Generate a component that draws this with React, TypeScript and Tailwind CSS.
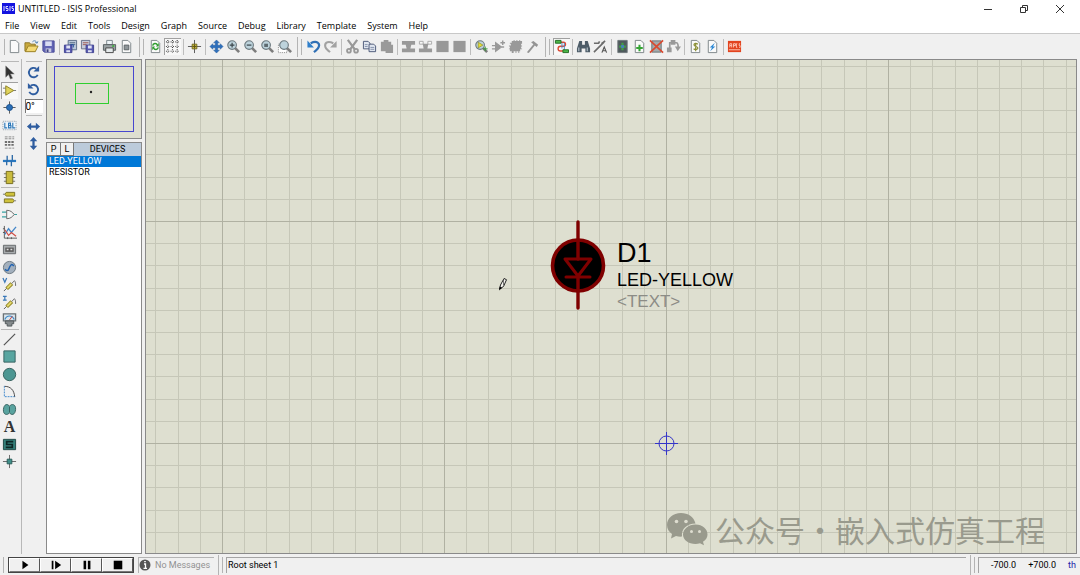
import type { ReactNode } from 'react';
import clsx from 'clsx';

const GRID_STEPS = [22, 44, 67, 89, 111, 133, 155, 178, 200];

const MENUS = ['File', 'View', 'Edit', 'Tools', 'Design', 'Graph', 'Source', 'Debug', 'Library', 'Template', 'System', 'Help'];

const page = <path d="M3.500 1.500h6l3 3v10h-9z" fill="#fafafa" stroke="#7c8488" />;
const lens = (
  <>
    <path d="M9.500 9.500l4.500 4.500" stroke="#7d7d7d" strokeWidth="2.800" />
    <circle cx="6.500" cy="6.500" r="4.600" fill="#bdd3dc" stroke="#6c797f" strokeWidth="1.200" />
  </>
);
const disk = (
  <>
    <path d="M2 2h12v12H3.500L2 12.500z" fill="#6264b4" stroke="#4a4c98" />
    <path d="M4.500 2.500h7v5h-7z" fill="#d9dcf2" />
    <path d="M5 10h6v4H5z" fill="#c9cbe0" />
    <path d="M6 11h2v3H6z" fill="#3f4180" />
  </>
);
const smallDisk = (
  <>
    <path d="M1.500 6.500h8v8h-8z" fill="#5658b0" stroke="#3f4190" />
    <path d="M3.500 7h4v3h-4zM3.500 12h4v2h-4z" fill="#dfe2f4" />
  </>
);
const probe = (
  <>
    <path d="M2 15l3-3" stroke="#555" />
    <path d="M5 12.500L10.500 7" stroke="#8d8220" strokeWidth="4" />
    <path d="M5.500 12L10 7.500" stroke="#e3d76c" strokeWidth="2" />
    <path d="M10.500 7l2-2.500c1.500-1 2 .5 2 5" stroke="#666" fill="none" />
  </>
);

const ICONS: Record<string, ReactNode> = {
  new: page,
  open: (
    <>
      <path d="M1 13V4h5l1 1.500h5V13z" fill="#c9a93c" stroke="#8b7426" />
      <path d="M1.500 13.500l3-6H15l-3 6z" fill="#f3d975" stroke="#9a8128" />
      <path d="M9 3c2-2 4-1 4.500 1M12 3.500l2 1 .8-2" fill="none" stroke="#4d7fb0" />
    </>
  ),
  save: disk,
  importSection: (
    <>
      <path d="M5.500 1.500h9v10h-9z" fill="#bcc9da" stroke="#5c6d86" />
      <path d="M7 4h6M7 6h6" stroke="#4f6580" />
      {smallDisk}
      <path d="M8 6h3v3" stroke="#234f9c" fill="none" />
    </>
  ),
  exportSection: (
    <>
      <path d="M1.500 1.500h9v9h-9z" fill="#c6cbd8" stroke="#66708a" />
      <path d="M3 4h6M3 6h4" stroke="#a05a55" />
      <path d="M6.500 6.500h8v8h-8z" fill="#5658b0" stroke="#3f4190" />
      <path d="M8.500 7h4v3h-4zM8.500 12h4v2h-4z" fill="#dfe2f4" />
    </>
  ),
  print: (
    <>
      <path d="M5 1.500h6V6H5z" fill="#eef4f8" stroke="#7b868c" />
      <path d="M1.500 6h13v6h-13z" fill="#9aa2a5" stroke="#555d60" />
      <path d="M4 9.500h8v5H4z" fill="#e5eaec" stroke="#444" />
      <path d="M11 7.500h2" stroke="#3fae3f" strokeWidth="2" />
    </>
  ),
  printArea: (
    <>
      {page}
      <path d="M5.500 6.500h5v5h-5z" fill="#8f9699" stroke="#5b6164" />
    </>
  ),
  redraw: (
    <>
      {page}
      <path d="M5 7c.5-2.500 4-3 5-.5M11 9c-.5 2.500-4 3-5 .5" fill="none" stroke="#2f9c2f" strokeWidth="1.600" />
      <path d="M11.500 4v4h-3zM4.500 12V8h3z" fill="#2f9c2f" />
    </>
  ),
  grid: (
    <path
      d="M3 1v14M8 1v14M13 1v14M1 3h14M1 8h14M1 13h14"
      stroke="#444"
      strokeDasharray="1 1.500"
      strokeWidth="1.200"
    />
  ),
  origin: (
    <>
      <path d="M8 1v14M1 8h14" stroke="#555" />
      <path d="M5.500 5.500h5v5h-5z" fill="#c5b536" stroke="#6f6620" />
      <path d="M8 6v4M6 8h4" stroke="#5a5318" />
    </>
  ),
  pan: (
    <path
      d="M8 1l3 3H9.300v2.700H12V5l3 3-3 3V9.300H9.300V12H11l-3 3-3-3h1.700V9.300H4V11L1 8l3-3v1.700h2.700V4H5z"
      fill="#2d6fbd"
      stroke="#245a99"
      strokeWidth=".5"
    />
  ),
  zoomIn: (
    <>
      {lens}
      <path d="M4 6.500h5M6.500 4v5" stroke="#3c474c" strokeWidth="1.300" />
    </>
  ),
  zoomOut: (
    <>
      {lens}
      <path d="M4 6.500h5" stroke="#3c474c" strokeWidth="1.300" />
    </>
  ),
  zoomAll: (
    <>
      {lens}
      <path d="M4.500 5h4v3.500h-4z" fill="#5d6a70" />
    </>
  ),
  zoomArea: (
    <>
      <path d="M1.500 5.500h9v9h-9z" fill="#fff" stroke="#888" strokeDasharray="1 1" />
      <g transform="translate(1 0)">{lens}</g>
    </>
  ),
  undo: (
    <>
      <path d="M5 4.500C12 1 15 5 13.500 8.500 13 11 10.500 12 8.500 14" fill="none" stroke="#2f6fb5" strokeWidth="2.400" />
      <path d="M1.500 1.500v7.500h7z" fill="#2f7fcb" />
    </>
  ),
  redo: (
    <>
      <path d="M11 4.500C4 1 1.500 5 2.500 8.500 3 11 5.500 12 7.500 14" fill="none" stroke="#a2a2a2" strokeWidth="2.200" />
      <path d="M14.500 2v7h-7z" fill="#a2a2a2" />
    </>
  ),
  cut: (
    <>
      <path d="M3 1l7.500 10M13 1L5.500 11" stroke="#999" strokeWidth="2.400" />
      <circle cx="4.200" cy="12.500" r="2" fill="none" stroke="#999" strokeWidth="2" />
      <circle cx="11.800" cy="12.500" r="2" fill="none" stroke="#999" strokeWidth="2" />
    </>
  ),
  copy: (
    <>
      <path d="M1.500 2.500h5l2 2v6h-7z" fill="#dfe5ef" stroke="#4b5878" />
      <path d="M7.500 5.500h5l2 2v6h-7z" fill="#dfe5ef" stroke="#4b5878" />
      <path d="M9 9h4M9 11h4M3 6h3M3 8h3" stroke="#8592ac" />
    </>
  ),
  paste: <path d="M2 3h3V1h5v2h3v3h2v9H7v-2H2z" fill="#999" />,
  blockCopy: <path d="M1 2h14v4h-4l-1 4h5v4H1v-4h5L5 6H1z" fill="#999" />,
  blockMove: (
    <>
      <path d="M1.500 2.500h4v3h-4zM10.500 2.500h4v3h-4z" fill="#f7f7f7" stroke="#aaa" />
      <path d="M5 5h6l-1 5h5v4H1v-4h5z" fill="#999" />
    </>
  ),
  block: <path d="M1.500 2h13v12h-13z" fill="#989898" />,
  pick: (
    <>
      {lens}
      <path d="M4.500 3.500v6l5-3z" fill="#e4dd35" stroke="#837d1c" strokeWidth=".6" />
      <path d="M12 8v5M9.500 10.500h5" stroke="#3d9a3d" />
    </>
  ),
  make: (
    <>
      <path d="M5 4v9l6-4.500zM1 7h4M1 10.500h4M10 8.500h4" fill="#999" stroke="#999" strokeWidth="1.400" />
      <path d="M12.500 1.500v5M10 4h5" stroke="#999" strokeWidth="1.500" />
    </>
  ),
  packaging: <path d="M4 2h2V1h1v1h2V1h1v1h2V1h1v1h2v3h-1v2h1v1h-1v2h1v1h-2v2h-1v2h-1v-2H9v2H8v-2H6v2H4v-2H2v-2H1v-1h1V8H1V7h2V5H2V4h2z" fill="#999" />,
  decompose: <path d="M2 14l7-8.500-2.500-2L9 2l5 4-1.500 2.500L10.500 7 4 15z" fill="#949494" />,
  wire: (
    <>
      <path d="M7 3.500h3c3 0 3 4 0 4.300H7c-3.500 0-3.500 5 0 5h3" fill="none" stroke="#dd4a35" strokeWidth="1.500" />
      <path d="M8.500 4v6M11 4v8" fill="none" stroke="#4585c2" />
      <path d="M1.500 1.500h6v3h-6zM9.500 11.500h6v3h-6z" fill="#4db84a" stroke="#226b22" />
    </>
  ),
  search: (
    <>
      <path d="M3.500 2h3v4h3V2h3l2.500 8v4h-5v-4H6v4H1v-4z" fill="#4d5c68" />
      <path d="M3 9v4M12 9v4" stroke="#b4c0ca" strokeWidth="1.200" />
    </>
  ),
  property: (
    <>
      <path d="M1 14L12 3M1 4.500h5l1-2M9 5l4-3" stroke="#6b6b6b" strokeWidth="1.700" fill="none" />
      <path d="M9.500 14.500L12 8.500l2.500 6M10.500 12.500h3.500" stroke="#555" fill="none" strokeWidth="1.200" />
    </>
  ),
  designExplorer: (
    <>
      <path d="M3 1.500h10v13H3z" fill="#4f5a5d" stroke="#70797c" />
      <path d="M8 4v8M4.500 8h7" stroke="#43a047" strokeWidth="2.400" />
      <path d="M6.500 6.500h3v3h-3z" fill="#4682bd" />
    </>
  ),
  newSheet: (
    <>
      {page}
      <path d="M8 6v7M4.500 9.500h7" stroke="#35a535" strokeWidth="2.200" />
    </>
  ),
  removeSheet: (
    <>
      <path d="M3 2h10v12H3z" fill="#a4abad" stroke="#697073" />
      <path d="M1 1.500l14 13M15 1.500L1 14.500" stroke="#d94a30" strokeWidth="1.800" />
    </>
  ),
  exitSheet: (
    <>
      <path d="M4 10V4h7c2 0 2 2 2 5" fill="none" stroke="#999" strokeWidth="1.800" />
      <path d="M1 9h5v5H1zM5 1h5v5H5zM9.500 8h6.500l-3.500 5z" fill="#999" />
    </>
  ),
  bom: (
    <>
      {page}
      <path d="M10.500 5.500c-2-1.500-4.500-.5-4 1s4 1.500 4 3-2.500 2.500-4.500 1M8.200 4v9" fill="none" stroke="#8a8f35" strokeWidth="1.300" />
    </>
  ),
  erc: (
    <>
      {page}
      <path d="M10.500 4L5 9h2.500L5.500 13 11 8H8.500z" fill="#2e8ad6" />
    </>
  ),
  ares: (
    <>
      <path d="M1 2h14v12H1z" fill="#e2431e" />
      <path d="M3 9V5h2v4M3 7h2M7 9V5h2v2H7M11 5H10v4h1M14 5h-1v2h1v2h-1M2 11.500h12" stroke="#ffc9b8" fill="none" />
    </>
  ),
  select: <path d="M4 1v12l3-2.800L9 15l2.200-1L9 9.500h4z" fill="#333" stroke="#777" strokeWidth=".6" />,
  component: (
    <>
      <path d="M1 5.500h3M1 10.500h3M12 8h3" stroke="#777" />
      <path d="M4 3v10l8.500-5z" fill="#e1d45c" stroke="#8b8024" />
    </>
  ),
  junction: (
    <>
      <path d="M8 1.500v13M1.500 8h13" stroke="#555" />
      <circle cx="8" cy="8" r="3.200" fill="#2a6fb8" stroke="#1b4f8a" />
    </>
  ),
  label: (
    <>
      <path d="M1 3.500h14v9H1z" fill="#eef4fa" stroke="#8d9aa6" strokeDasharray="1 1" />
      <path d="M3 5v5.500h2.500M7 5v5.500h2.500V8H7h2V5.500H7M11.500 5v5.500H14" stroke="#2c77b8" fill="none" strokeWidth="1.200" />
    </>
  ),
  script: (
    <>
      <path d="M3 2h10M3 4h10M3 14h10" stroke="#8a8a8a" strokeDasharray="3 1" />
      <path d="M3 7.500h10M3 10.500h10" stroke="#6e6e6e" strokeDasharray="2.500 1" strokeWidth="2" />
    </>
  ),
  bus: (
    <>
      <path d="M1 8.500h14" stroke="#2878c0" strokeWidth="2.400" />
      <path d="M5.500 3v6M11 2v6M5 9v4M10 9v5" stroke="#2b68a5" strokeWidth="1.400" />
    </>
  ),
  subcircuit: (
    <>
      <path d="M2 4h12M2 8h12M2 12h12" stroke="#777" strokeWidth="1.300" />
      <path d="M4.500 1.500h7v13h-7z" fill="#c9bb3d" stroke="#746b1c" />
    </>
  ),
  terminal: (
    <>
      <path d="M4.500 2.500h9v4h-9L3 4.500zM2.500 9.500h9l1.500 2-1.500 2h-9z" fill="#cfc23c" stroke="#7b7224" />
      <path d="M1 4.500h2M13 11.500h2" stroke="#777" />
    </>
  ),
  pin: (
    <>
      <path d="M0 5.500h5M0 10.500h5M13 8h3" stroke="#39a2a2" strokeWidth="1.200" />
      <path d="M5 3.500c4 0 6 2 8 4.500-2 2.500-4 4.500-8 4.500z" fill="#f5f5f5" stroke="#666" />
    </>
  ),
  graph: (
    <>
      <path d="M2.500 1v13H16M1 4h2M1 8h2M6 13v2M10 13v2" stroke="#555" fill="none" />
      <path d="M3 10l4-6 3 4 5-6" stroke="#4587c8" fill="none" strokeWidth="1.400" />
      <path d="M3 5l4 6 3-3 5 4" stroke="#cf4b42" fill="none" strokeWidth="1.200" />
    </>
  ),
  tape: (
    <>
      <path d="M1.500 3.500h13v9h-13z" fill="#a7abad" stroke="#63686a" />
      <path d="M3.500 6h9v4.500h-9z" fill="#5a5a5a" />
      <path d="M5 8h2M9 8h2" stroke="#ddd" strokeWidth="1.500" />
    </>
  ),
  generator: (
    <>
      <circle cx="8" cy="8" r="6.500" fill="#a3b0bd" stroke="#68747e" />
      <path d="M3.500 9.500c1 2.500 3 2.500 4-.5s3-6 5-2.500" stroke="#2363b0" fill="none" strokeWidth="1.600" />
    </>
  ),
  voltage: (
    <>
      {probe}
      <path d="M1 1l2 4.500L5 1" stroke="#3a78b8" fill="none" strokeWidth="1.300" />
    </>
  ),
  current: (
    <>
      {probe}
      <path d="M1 1.500h4M3 1.500v4M1 5.500h4" stroke="#3a78b8" fill="none" strokeWidth="1.300" />
    </>
  ),
  instrument: (
    <>
      <path d="M1.500 2h13v7.500h-13z" fill="#d9e5ec" stroke="#6a7276" strokeWidth="1.400" />
      <path d="M3 8c2-5 8-5 10 0" stroke="#3d87c5" fill="none" strokeWidth="1.300" />
      <path d="M8 8.500l3-4" stroke="#ca3b36" />
      <path d="M3.500 9.500h9v3h-2v2.500h-5v-2.500h-2z" fill="#858b8d" stroke="#4f5557" />
    </>
  ),
  line: <path d="M2 14L14 2" stroke="#555" strokeWidth="1.400" />,
  box: <path d="M2 2h12v12H2z" fill="#58a5a0" stroke="#35605e" />,
  circle: <circle cx="8" cy="8" r="6.600" fill="#4c9692" stroke="#35605e" />,
  arc: (
    <>
      <path d="M2.500 2v11.500H14" stroke="#3c85cc" strokeDasharray="2 1" fill="none" />
      <path d="M3 2.500c6 0 10 4 10.500 11" stroke="#444" fill="none" />
    </>
  ),
  path: <path d="M8 4.500C6 1.500 2 2 1.500 8S6 14.500 8 11.500c2 3 6 2.500 6.500-3.500S10 1.500 8 4.500zM8 5v6" fill="#59a39f" stroke="#35605e" />,
  symbol: (
    <>
      <path d="M1.500 2.500h13v11h-13z" fill="#347f79" stroke="#1e4643" />
      <path d="M12 5H5v3h6v3H4" stroke="#0d2625" strokeWidth="1.800" fill="none" />
    </>
  ),
  marker: (
    <>
      <path d="M8 1v14M1 8h14" stroke="#666" />
      <path d="M5.500 5.500h5v5h-5z" fill="#408f89" stroke="#2a5c59" />
    </>
  ),
  rotateCw: (
    <>
      <path d="M12.500 10.500A5 5 0 1 1 11 4" fill="none" stroke="#2f5da0" strokeWidth="2" />
      <path d="M14 1v6H8z" fill="#2f5da0" />
    </>
  ),
  rotateCcw: (
    <>
      <path d="M3.500 10.500A5 5 0 1 0 5 4" fill="none" stroke="#2f5da0" strokeWidth="2" />
      <path d="M2 1v6h6z" fill="#2f5da0" />
    </>
  ),
  mirrorX: <path d="M1 8l4.500-4v2.800h5V4L15 8l-4.500 4V9.200h-5V12z" fill="#2f5da0" />,
  mirrorY: <path d="M8 1l4 4.500H9.200v5H12L8 15l-4-4.500h2.800v-5H4z" fill="#2f5da0" />,
};

function Icon({ name }: { name: string }) {
  return (
    <svg viewBox="0 0 16 16" className="size-[15px] shrink-0">
      {ICONS[name]}
    </svg>
  );
}

function ToolButton({ name, active }: { name: string; active?: boolean }) {
  return (
    <button
      aria-label={name}
      className={clsx(
        'flex h-[17px] w-[17px] items-center justify-center',
        active && 'bg-[#f8f8f8] shadow-[inset_1px_1px_0_#a0a0a0]'
      )}
    >
      {name === 'text' ? (
        <span className="font-['Liberation_Serif',serif] text-base leading-4 font-bold text-[#333]">A</span>
      ) : (
        <Icon name={name} />
      )}
    </button>
  );
}

// a pair of raised rails that starts every dockable bar
function Grip() {
  return (
    <div className="flex h-5 w-3 shrink-0 items-center justify-center gap-[3px]">
      <div className="h-full w-px bg-[#b4b4b4]" />
      <div className="h-4 w-px bg-[#b4b4b4]" />
    </div>
  );
}

// bars > groups > buttons
const TOOLBARS = [
  [['new', 'open', 'save'], ['importSection', 'exportSection'], ['print', 'printArea']],
  [['redraw', 'grid'], ['origin'], ['pan', 'zoomIn', 'zoomOut', 'zoomAll', 'zoomArea']],
  [['undo', 'redo'], ['cut', 'copy', 'paste'], ['blockCopy', 'blockMove', 'block', 'block'], ['pick', 'make', 'packaging', 'decompose']],
  [['wire'], ['search', 'property'], ['designExplorer', 'newSheet', 'removeSheet', 'exitSheet'], ['bom', 'erc'], ['ares']],
];

function Toolbar() {
  return (
    <div className="flex h-[25px] items-center pl-1">
      <div className="mr-px h-4 w-px bg-[#b4b4b4]" />
      {TOOLBARS.map((groups, i) => (
        <div key={i} className="flex items-center">
          {i > 0 && <Grip />}
          {groups.map((names, j) => (
            <div key={j} className="flex items-center">
              {j > 0 && (
                <div className="flex h-4 w-[5px] justify-center">
                  <div className="w-px bg-[#bdbdbd]" />
                </div>
              )}
              {names.map((name, k) => (
                <ToolButton key={k} name={name} active={name === 'grid' || name === 'wire'} />
              ))}
            </div>
          ))}
        </div>
      ))}
    </div>
  );
}

const MODES = [
  ['select', 'component', 'junction', 'label', 'script', 'bus', 'subcircuit'],
  ['terminal', 'pin', 'graph', 'tape', 'generator', 'voltage', 'current', 'instrument'],
  ['line', 'box', 'circle', 'arc', 'path', 'text', 'symbol', 'marker'],
];

function ModeBar() {
  return (
    <div className="flex w-[22px] flex-col border-r border-[#b8b8b8] pt-0.5 pl-px">
      <div className="mb-0.5 h-px w-[18px] bg-[#b8b8b8]" />
      {MODES.map((names, i) => (
        <div key={i}>
          {i > 0 && <div className="my-px h-px w-[18px] bg-[#b8b8b8]" />}
          <div className={clsx('flex flex-col justify-between', i === 0 ? 'h-[122px]' : 'h-[139px]')}>
            {names.map((name) => (
              <ToolButton key={name} name={name} active={name === 'component'} />
            ))}
          </div>
        </div>
      ))}
    </div>
  );
}

function OrientationBar() {
  return (
    <div className="flex w-6 flex-col items-center pt-0.5 pr-px">
      <div className="mb-0.5 h-px w-4 bg-[#b8b8b8]" />
      <ToolButton name="rotateCw" />
      <ToolButton name="rotateCcw" />
      <input
        aria-label="Rotation"
        defaultValue="0°"
        className="mt-px h-[14px] w-[18px] border-t border-l border-[#777] bg-white font-[Roboto,sans-serif] text-[10px] leading-3 text-black outline-none"
      />
      <div className="my-0.5 h-px w-4 bg-[#b8b8b8]" />
      <ToolButton name="mirrorX" />
      <ToolButton name="mirrorY" />
    </div>
  );
}

function SidePanel() {
  const devices = ['LED-YELLOW', 'RESISTOR'];
  return (
    <div className="flex w-24 flex-col gap-[3px]">
      <div className="h-20 border border-[#8a8a8a] bg-[#dedfd0] p-1.5">
        <svg viewBox="0 0 82 66" className="h-full w-full">
          <rect x="1.500" y="0.500" width="79" height="65" fill="none" stroke="#4747cf" />
          <rect x="22.500" y="17.500" width="33" height="20" fill="none" stroke="#2fcf2f" />
          <circle cx="38" cy="26" r="1.200" fill="#222" />
        </svg>
      </div>
      <div className="flex flex-1 flex-col border border-[#8a8a8a] bg-white font-[Roboto,sans-serif] text-[9px] leading-[11px] text-black">
        <div className="flex h-[13px] bg-[#bccbdb]">
          <button className="w-[14px] border-r border-b border-[#777] bg-[#f0f0f0]">P</button>
          <button className="w-[13px] border-r border-b border-[#777] bg-[#f0f0f0]">L</button>
          <div className="flex-1 text-center leading-[13px]">DEVICES</div>
        </div>
        <ul>
          {devices.map((device, i) => (
            <li key={device} className={clsx('px-0.5', i === 0 && 'bg-[#0078d7] text-white')}>
              {device}
            </li>
          ))}
        </ul>
      </div>
    </div>
  );
}

function Led() {
  return (
    <svg viewBox="0 0 56 90" className="absolute top-[160px] left-[404px] h-[90px] w-14">
      <circle cx="28" cy="45.500" r="25.500" fill="#000" stroke="#7f0000" strokeWidth="3.600" />
      <path d="M28 2v37M28 56v32" stroke="#7f0000" strokeWidth="3.400" strokeLinecap="round" />
      <path d="M15 39h26L28 56zM16 57h24" fill="none" stroke="#7f0000" strokeWidth="3" strokeLinecap="round" strokeLinejoin="round" />
    </svg>
  );
}

function Schematic() {
  return (
    <main className="relative mr-[3px] ml-[3px] flex-1 overflow-hidden border border-[#8a8a8a] bg-[#dedfd0] font-['Liberation_Sans',Arial,sans-serif]">
      <svg className="h-full w-full" shapeRendering="crispEdges">
        <defs>
          <pattern id="grid" x="76" y="161" width="222" height="222" patternUnits="userSpaceOnUse">
            {GRID_STEPS.map((n) => (
              <path key={n} d={`M${n + 0.5} 0v222M0 ${n + 0.5}h222`} stroke="#c6c7b8" />
            ))}
            <path d="M.5 0v222M0 .5h222" stroke="#b0b1a2" />
          </pattern>
        </defs>
        <rect width="100%" height="100%" fill="url(#grid)" />
      </svg>

      <Led />
      <div className="absolute top-[178px] left-[471px] whitespace-nowrap text-black">
        <div className="text-[27px] leading-[30px]">D1</div>
        <div className="text-lg leading-6">LED-YELLOW</div>
        <div className="text-[17px] leading-5 text-[#8c8c86]">&lt;TEXT&gt;</div>
      </div>

      {/* pencil cursor */}
      <svg viewBox="0 0 10 14" className="absolute top-[217px] left-[352px] h-[14px] w-[10px]">
        <path d="M1.500 12L2.500 8l3.500-6.500 2.500 1.200L5.500 9.500z" fill="#f4f4ee" stroke="#222" />
        <path d="M5.500 2v6" stroke="#444" strokeWidth=".7" />
        <path d="M1 13.500l.8-4 2.200 1.500z" fill="#000" />
      </svg>

      {/* sheet origin */}
      <svg viewBox="0 0 24 24" className="absolute top-[371px] left-[508px] size-6" fill="none" stroke="#3535c8">
        <circle cx="12.500" cy="12.500" r="7.500" />
        <path d="M12.500 1v23M1 12.500h23" />
      </svg>

      <div className="absolute right-[31px] bottom-1 flex items-center gap-[7px] text-[#999a8d]">
        <svg viewBox="0 0 42 34" className="h-[34px] w-[42px]" fill="currentColor">
          <path d="M15 1C7 1 1 6 1 13c0 4 2 7 5 9l-1 4.500 5-2.500c2 .6 4 .8 6 .6C15 17 21 11.500 29.500 11.500 28 5 22 1 15 1z" />
          <path d="M29.500 12.500c-7 0-12.500 4.500-12.500 10S22.500 32 29.500 32c1.500 0 3-.3 4.500-.7l4 2-1-3.500c3-2 4.500-4.500 4.500-7.300 0-5.500-5-10-12-10z" />
          <g fill="#deddd0">
            <circle cx="10.500" cy="9.500" r="1.800" />
            <circle cx="20" cy="9.500" r="1.800" />
            <circle cx="25.500" cy="19.500" r="1.500" />
            <circle cx="33.500" cy="19.500" r="1.500" />
          </g>
        </svg>
        <span className="font-['Noto_Sans_CJK_SC',sans-serif] text-[30px] leading-10 whitespace-nowrap">公众号·嵌入式仿真工程</span>
      </div>
    </main>
  );
}

function StatusBar() {
  const controls = [
    { label: 'Play', d: 'M4 2v10l7-5z' },
    { label: 'Step', d: 'M2 2h2v10H2zM6 2v10l7-5z' },
    { label: 'Pause', d: 'M3 2h3v10H3zM8 2h3v10H8z' },
    { label: 'Stop', d: 'M2 2h10v10H2z' },
  ];
  return (
    <footer className="flex h-[21px] items-center font-[Roboto,sans-serif] text-[9px] text-black">
      <div className="mr-1 ml-[3px] h-4 w-px bg-[#b4b4b4]" />
      <div className="flex h-4 border border-[#444]">
        {controls.map(({ label, d }) => (
          <button
            key={label}
            aria-label={label}
            className="flex w-[31px] items-center justify-center border border-t-white border-r-[#555] border-b-[#777] border-l-white"
          >
            <svg viewBox="0 0 14 14" className="size-3">
              <path d={d} />
            </svg>
          </button>
        ))}
      </div>
      <div className="ml-1 flex h-4 w-[76px] items-center gap-1 border-t border-l border-[#b4b4b4] text-[#929292]">
        <svg viewBox="0 0 12 12" className="size-3 shrink-0">
          <circle cx="6" cy="6" r="5.500" fill="#555" />
          <path d="M5 5h1.500v4M4.500 9.300H8M5.200 2.700h1.600" stroke="#fff" strokeWidth="1.300" fill="none" />
        </svg>
        <span className="pt-px whitespace-nowrap">No Messages</span>
      </div>
      <Grip />
      <div className="h-4 flex-1 border-t border-l border-[#a4a4a4] pl-px leading-[15px]">Root sheet 1</div>
      <Grip />
      <div className="flex h-4 w-[102px] items-center justify-between border-t border-l border-[#a4a4a4] pt-px pr-1 pl-3">
        <span>-700.0</span>
        <span>+700.0</span>
        <span className="text-[#2222a8]">th</span>
      </div>
    </footer>
  );
}

function TitleBar() {
  return (
    <header className="flex h-[17px] items-center bg-white px-0.5">
      <svg viewBox="0 0 13 11" className="h-[11px] w-[13px]">
        <path d="M0 0h13v11H0z" fill="#1414e0" />
        <path d="M2 3v5M6 3.500H4v2h2v2H4M8 3v5M11.500 3.500H10v2h1.500v2H10" stroke="#dcdcff" fill="none" />
      </svg>
      <h1 className="ml-[3px] flex-1 pt-px text-[9px]">UNTITLED - ISIS Professional</h1>
      <div className="flex text-[#333]">
        <button aria-label="Minimize" className="flex w-9 justify-center">
          <svg viewBox="0 0 10 10" className="size-[10px]">
            <path d="M1 5.500h8" stroke="currentColor" />
          </svg>
        </button>
        <button aria-label="Restore" className="flex w-9 justify-center">
          <svg viewBox="0 0 10 10" className="size-[10px]">
            <path d="M1.500 3.500h5v5h-5zM3.500 3V1.500h5v5H7" stroke="currentColor" fill="none" />
          </svg>
        </button>
        <button aria-label="Close" className="flex w-9 justify-center">
          <svg viewBox="0 0 10 10" className="size-[10px]">
            <path d="M1 1l8 8M9 1L1 9" stroke="currentColor" />
          </svg>
        </button>
      </div>
    </header>
  );
}

export default function App() {
  return (
    <div className="flex h-screen flex-col bg-[#f0f0f0] font-['Open_Sans',sans-serif] text-black">
      <TitleBar />
      <nav className="flex h-[17px] items-center gap-[11px] border-b border-[#c8c8c8] bg-white pt-0.5 pl-[5px] text-[9px]">
        {MENUS.map((menu) => (
          <button key={menu}>{menu}</button>
        ))}
      </nav>
      <Toolbar />
      <div className="flex min-h-0 flex-1">
        <ModeBar />
        <OrientationBar />
        <SidePanel />
        <Schematic />
      </div>
      <StatusBar />
    </div>
  );
}
